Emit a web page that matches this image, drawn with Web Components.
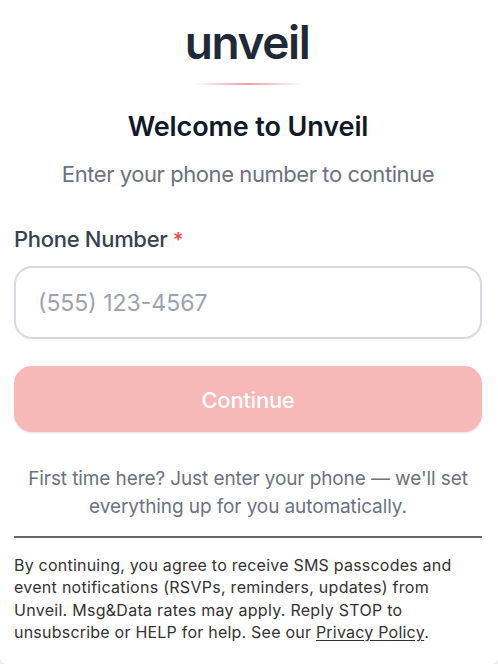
<!DOCTYPE html>
<html lang="en"><head><meta charset="utf-8"><title>Unveil</title>
<style>body{margin:0;background:#eee;font-family:Inter,sans-serif}</style></head><body>
<unveil-login></unveil-login>
<script>
const define=(name,html)=>customElements.define(name,class extends HTMLElement{
  constructor(){super();this.attachShadow({mode:'open'}).innerHTML=html}
});
define('text-line',`<style>
:host{display:block;white-space:nowrap;font-size:var(--size);line-height:var(--lh);letter-spacing:var(--ls,0)}
</style><slot></slot>`);
define('brand-mark',`<style>
:host{display:flex;flex-direction:column;align-items:center;height:86px}
.name{font-size:46px;line-height:56px;font-weight:600;letter-spacing:-1.4px;color:#1f2937;margin:14px 2px 0 0}
.rule{width:108px;height:2px;margin-top:13px;background:linear-gradient(90deg,transparent,#fa9aa5,transparent)}
</style><div class="name"><slot></slot></div><div class="rule"></div>`);
define('phone-field',`<style>
:host{display:block}
label{display:block;font-size:22px;line-height:32px;font-weight:450;letter-spacing:-.3px;color:#374151}
label b{color:#ef4444;font-weight:500;font-size:20px;line-height:20px}
.box{box-sizing:border-box;height:73px;margin-top:11px;border:2px solid #d8dae0;border-radius:18px;padding:0 22px;display:flex;align-items:center;font-size:23px;color:#9ca3af}
</style><label><slot></slot> <b>*</b></label><div class="box"><slot name="hint"></slot></div>`);
define('primary-button',`<style>
:host{display:flex;align-items:center;justify-content:center;box-sizing:border-box;height:66px;padding-top:2px;border-radius:18px;background:#f7b8b8;color:#fff;font-size:22px;font-weight:500;letter-spacing:-.25px;box-shadow:0 1px 3px #0000001a}
</style><slot></slot>`);
define('unveil-login',`<style>
:host{display:flex;flex-direction:column;box-sizing:border-box;width:498px;height:664px;padding:0 16px 0 14px;background:#fff;border-radius:0 0 6px 6px}
.title{--size:27px;--lh:36px;--ls:-.1px;font-weight:600;color:#111827;text-align:center;margin-top:23px}
.sub{--size:22px;--lh:32px;--ls:-.43px;color:#6b7280;text-align:center;margin-top:13px}
phone-field{margin-top:33px}
primary-button{margin-top:27px}
.help{color:#6b7280;text-align:center;--size:19px;--lh:28px;--ls:-.1px;margin-top:33px}
.terms{border-top:2px solid #666;margin-top:15px;padding-top:16px;color:#333;--size:16px;--lh:22.3px;--ls:.22px}
u{text-underline-offset:2px}
</style>
<brand-mark>unveil</brand-mark>
<text-line class="title"><span>Welcome to Unveil</span></text-line>
<text-line class="sub"><span>Enter your phone number to continue</span></text-line>
<phone-field>Phone Number<span slot="hint">(555) 123-4567</span></phone-field>
<primary-button><span>Continue</span></primary-button>
<div class="help"><text-line>First time here? Just enter your phone — we'll set</text-line><text-line>everything up for you automatically.</text-line></div>
<div class="terms"><text-line>By continuing, you agree to receive SMS passcodes and</text-line><text-line style="--ls:.28px">event notifications (RSVPs, reminders, updates) from</text-line><text-line style="--ls:.28px">Unveil. Msg&amp;Data rates may apply. Reply STOP to</text-line><text-line>unsubscribe or HELP for help. See our <u>Privacy Policy</u>.</text-line></div>`);
</script></body></html>
